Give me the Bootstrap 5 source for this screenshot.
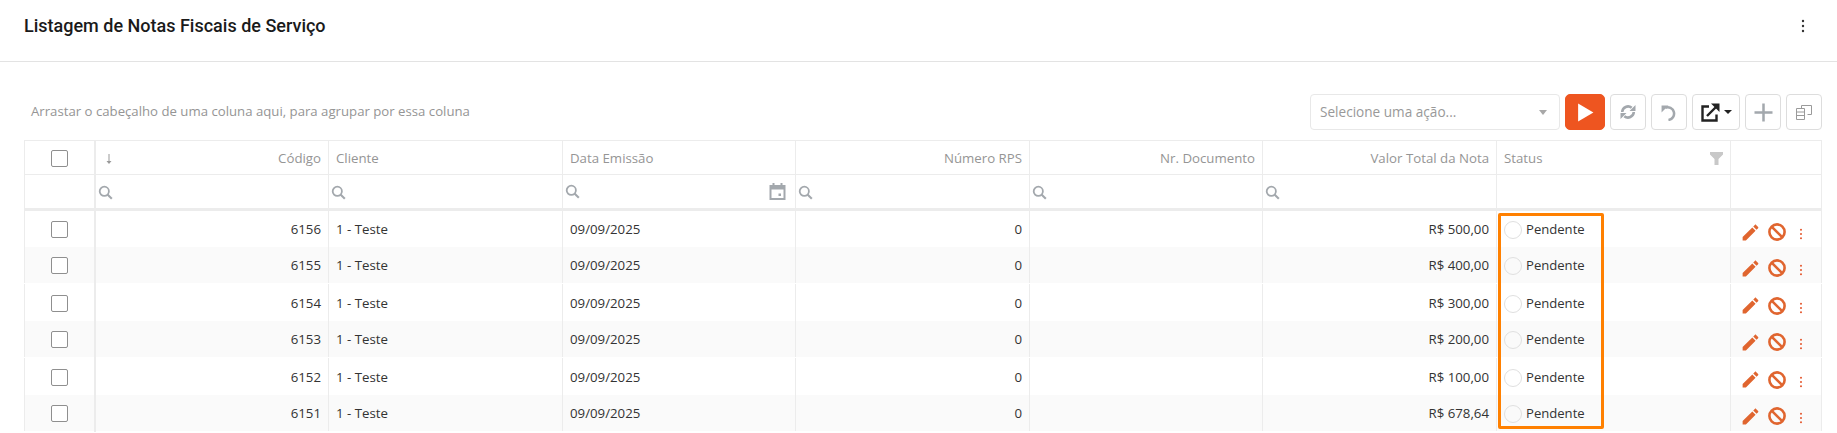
<!DOCTYPE html>
<html lang="pt-BR">
<head>
<meta charset="utf-8">
<title>Listagem de Notas Fiscais de Serviço</title>
<link href="https://cdn.jsdelivr.net/npm/bootstrap@5.3.0/dist/css/bootstrap.min.css" rel="stylesheet">
<style>
html,body{height:433px;overflow:hidden;background:#fff}
body{font-family:"Open Sans","Noto Sans",sans-serif;font-size:13.25px;color:#333}
.ph-bar{height:62px;padding:0 24px 10px;border-bottom:1px solid #e3e3e3}
.ph-title{font-family:Roboto,sans-serif;font-weight:500;font-size:18px;color:#1a1a1a;margin:0}
.ph-menu{color:#333;margin-right:8px}
.content-wrap{padding:32px 16px 0 24px;position:relative}
.tool-bar{height:36px;margin-bottom:10px;margin-right:-1px}
.group-hint{color:#959595;padding-left:7px;font-size:13.2px}
.act-select{width:250px;height:36px;border:1px solid #e8e8e8;border-radius:4px;padding:0 12px 0 9px;color:#999;margin-right:5px;font-size:13.6px}
.act-caret{width:0;height:0;border:4.5px solid transparent;border-top:5px solid #a8a8a8;border-bottom:0}
.tool-btns{gap:5px}
.tbtn{height:36px;width:36px;padding:0;border:1px solid #ddd;border-radius:4px;background:#fff;display:flex;align-items:center;justify-content:center;color:#a3a8ad}
.tbtn-play{width:40px;background:#ee5520;border-color:#ee5520;border-radius:5px}
.tbtn-wide{width:48px;color:#222;gap:4px}
.tb-caret{width:0;height:0;border:4px solid transparent;border-top:4px solid #222;border-bottom:0}
.grid-tbl{table-layout:fixed;width:1797px;margin:0;border-collapse:collapse}
.grid-tbl td,.grid-tbl th{border:1px solid #ececec;padding:0 7px;vertical-align:middle;font-weight:400;white-space:nowrap;overflow:hidden;box-shadow:none}
.grid-tbl thead th{color:#959595;height:34px;padding-top:2px}
.grid-tbl thead tr.filter-row td{height:35px;border-bottom:3px solid #ececec;padding:0 0 0 2px;color:#a3a8ad}
.grid-tbl tbody td{height:37px;color:#333;border-top:0;border-bottom:0;padding-top:3px}
.grid-tbl tbody tr:nth-child(even) td{background:#fafafa;border-bottom:1px solid #fff}
.grid-tbl .sel-col{border-right:2px solid #ececec;text-align:center;padding:0}
.grid-tbl tbody .sel-col{padding-top:1px}
.chk{width:17px;height:17px;border:1px solid #8f8f8f;border-radius:2px;display:inline-block;vertical-align:middle;background:#fff}
.sort-mark{margin-left:2px}
.status-dot{width:18px;height:18px;border:1px solid #e0e0e0;border-radius:50%;background:transparent;display:inline-block;flex:none}
.status-wrap{gap:4px;color:#333;margin-bottom:0;font-size:13.1px}
.grid-tbl tbody td.act-cell{padding:7px 0 0 9px}
.act-icons{gap:7px;color:#e0652f}
.kebab-red{color:#e4572e;margin-left:6px;margin-top:4px}
.orange-frame{position:absolute;left:1498px;top:151px;width:106px;height:216px;border:3px solid #ff8000;border-radius:2px;pointer-events:none}
.flt-cal{margin-right:9px}
</style>
</head>
<body>
<svg width="0" height="0" class="position-absolute">
  <symbol id="i-search" viewBox="0 0 15 15"><circle cx="6.300" cy="6.300" r="4.600" fill="none" stroke="currentColor" stroke-width="1.800"/><path d="M9.500 9.500 13.800 13.800" stroke="currentColor" stroke-width="2.100" fill="none"/></symbol>
  <symbol id="i-pencil" viewBox="0 0 24 24"><path fill="currentColor" d="M3 17.250V21h3.750L17.810 9.940l-3.750-3.750L3 17.250zM20.710 7.040c.39-.39.39-1.020 0-1.410l-2.340-2.340c-.39-.39-1.020-.39-1.410 0l-1.830 1.830 3.750 3.750 1.830-1.830z"/></symbol>
  <symbol id="i-block" viewBox="0 0 18 18"><circle cx="9" cy="9" r="7.600" fill="none" stroke="currentColor" stroke-width="2.600"/><path d="M3.600 3.600 14.400 14.400" stroke="currentColor" stroke-width="2.600"/></symbol>
  <symbol id="i-kebab" viewBox="0 0 4 14"><circle cx="2" cy="2" r="1.200" fill="currentColor"/><circle cx="2" cy="7" r="1.200" fill="currentColor"/><circle cx="2" cy="12" r="1.200" fill="currentColor"/></symbol>
</svg>

<header class="ph-bar d-flex align-items-center justify-content-between">
  <h1 class="ph-title">Listagem de Notas Fiscais de Serviço</h1>
  <svg width="4" height="14" class="ph-menu"><use href="#i-kebab"/></svg>
</header>

<main class="content-wrap">
  <div class="tool-bar d-flex align-items-center">
    <div class="group-hint flex-grow-1">Arrastar o cabeçalho de uma coluna aqui, para agrupar por essa coluna</div>
    <div class="act-select d-flex align-items-center justify-content-between"><span>Selecione uma ação...</span><span class="act-caret"></span></div>
    <div class="tool-btns d-flex align-items-center">
      <button class="tbtn tbtn-play" type="button" aria-label="Executar"><svg width="17" height="19" viewBox="0 0 16 18"><path fill="#fff" d="M1 .5v17L15.500 9z"/></svg></button>
      <button class="tbtn" type="button" aria-label="Atualizar"><svg width="16" height="16" viewBox="0 0 16 16" fill="none" stroke="currentColor" stroke-width="2.600"><path d="M2.200 8a5.800 5.800 0 0 1 9.500-4.200"/><path d="M13.800 8a5.800 5.800 0 0 1-9.500 4.200"/><path fill="currentColor" stroke="none" d="M9.500 7H15.500V1zM6.500 9H.5v6z"/></svg></button>
      <button class="tbtn" type="button" aria-label="Desfazer"><svg width="17" height="17" viewBox="0 0 16 16" fill="none" stroke="currentColor" stroke-width="2.400"><path d="M4 3.500A6 6 0 1 1 7 15"/><path fill="currentColor" stroke="none" d="M.5 1.500h6.500L.5 8z"/></svg></button>
      <button class="tbtn tbtn-wide" type="button" aria-label="Exportar"><svg width="19" height="19" viewBox="0 0 19 19" fill="none" stroke="#222" stroke-width="2.400"><path d="M8 3.500H1.500v14h14v-6"/><path d="M6 13 16 3"/><path fill="#222" stroke="none" d="M10 .5h8.500V9z"/></svg><span class="tb-caret"></span></button>
      <button class="tbtn" type="button" aria-label="Adicionar"><svg width="19" height="19" viewBox="0 0 19 19" fill="none" stroke="currentColor" stroke-width="2.500"><path d="M9.500 .5v18M.5 9.500h18"/></svg></button>
      <button class="tbtn" type="button" aria-label="Colunas"><svg width="16" height="15" viewBox="0 0 16 15" fill="none" stroke="#9a9a9a" stroke-width="1"><path d="M5.500 3V.5h10v9h-4"/><path d="M.5 3.500h8v11h-8zM.5 7h8M.5 10.500h8"/></svg></button>
    </div>
  </div>

  <table class="table grid-tbl">
    <colgroup>
      <col style="width:70px"><col style="width:234px"><col style="width:234px"><col style="width:233px"><col style="width:234px"><col style="width:233px"><col style="width:234px"><col style="width:234px"><col style="width:91px">
    </colgroup>
    <thead>
      <tr>
        <th class="sel-col"><span class="chk"></span></th>
        <th class="text-end"><span class="float-start sort-mark"><svg width="8" height="12" viewBox="0 0 8 12" fill="none" stroke="#999" stroke-width="1"><path d="M4 1v9"/><path fill="#999" stroke="none" d="M1.500 8h5L4 11z"/></svg></span>Código</th>
        <th>Cliente</th>
        <th>Data Emissão</th>
        <th class="text-end">Número RPS</th>
        <th class="text-end">Nr. Documento</th>
        <th class="text-end">Valor Total da Nota</th>
        <th><div class="d-flex align-items-center justify-content-between"><span>Status</span><svg width="13" height="13" viewBox="0 0 13 13"><path fill="#c8c8c8" d="M0 0h13v2.500L8.500 7v6h-4V7L0 2.500z"/></svg></div></th>
        <th></th>
      </tr>
      <tr class="filter-row">
        <td class="sel-col"></td>
        <td><svg width="15" height="15"><use href="#i-search"/></svg></td>
        <td><svg width="15" height="15"><use href="#i-search"/></svg></td>
        <td><div class="d-flex align-items-center justify-content-between"><svg width="15" height="15"><use href="#i-search"/></svg><svg width="17" height="17" viewBox="0 0 17 17" class="flt-cal"><path fill="#a3a8ad" d="M.5 2h3V0h2v2h6V0h2v2h3v15H.5zM2.500 6.500v8.500h12V6.500zM9.500 10.500H12V13H9.500z"/></svg></div></td>
        <td><svg width="15" height="15"><use href="#i-search"/></svg></td>
        <td><svg width="15" height="15"><use href="#i-search"/></svg></td>
        <td><svg width="15" height="15"><use href="#i-search"/></svg></td>
        <td></td>
        <td></td>
      </tr>
    </thead>
    <tbody id="rows"></tbody>
  </table>
  <div class="orange-frame"></div>
</main>

<script>
var data=[["6156","R$ 500,00"],["6155","R$ 400,00"],["6154","R$ 300,00"],["6153","R$ 200,00"],["6152","R$ 100,00"],["6151","R$ 678,64"]];
document.getElementById('rows').innerHTML=data.map(function(r){
 return '<tr><td class="sel-col"><span class="chk"></span></td><td class="text-end">'+r[0]+'</td><td>1 - Teste</td><td>09/09/2025</td><td class="text-end">0</td><td></td><td class="text-end">'+r[1]+'</td><td><div class="status-wrap d-flex align-items-center"><span class="status-dot"></span><span>Pendente</span></div></td><td class="act-cell"><div class="act-icons d-flex align-items-center"><svg width="21" height="21"><use href="#i-pencil"/></svg><svg width="18" height="18"><use href="#i-block"/></svg><svg width="4" height="12" class="kebab-red"><use href="#i-kebab"/></svg></div></td></tr>';
}).join('');
</script>
<script src="https://cdn.jsdelivr.net/npm/bootstrap@5.3.0/dist/js/bootstrap.bundle.min.js"></script>
</body>
</html>
